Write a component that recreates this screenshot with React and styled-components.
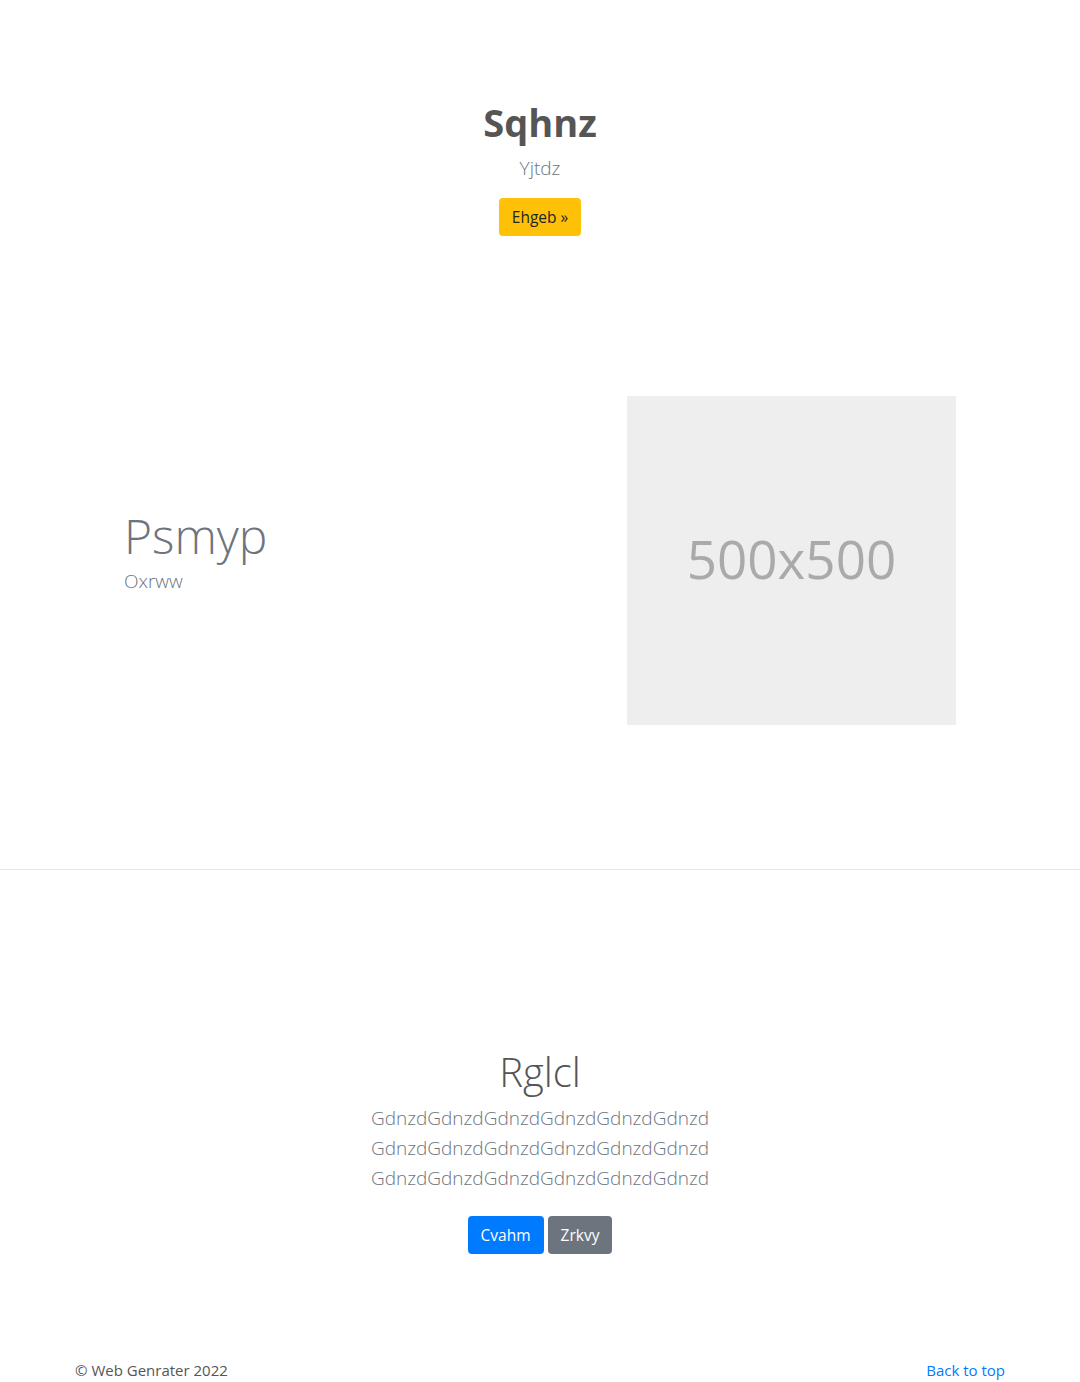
import styled, { createGlobalStyle } from 'styled-components'

const GlobalStyle = createGlobalStyle`
  * { box-sizing: border-box; }
  body {
    margin: 0;
    font-family: "Open Sans", "Noto Sans", sans-serif;
    font-size: 16px;
    line-height: 1.5;
    color: #212529;
    background: #fff;
  }
`

const Container = styled.div`
  width: 960px;
  margin: 0 auto;
  padding: 0 15px;
`

const Header = styled.section`
  padding: 98px 0 64px;
  text-align: center;
`

const Title = styled.h1`
  margin: 0;
  font-size: 38px;
  line-height: 48px;
  font-weight: 700;
  color: #555;
`

const Lead = styled.p`
  margin: ${({ $mb }) => $mb || '7px 0 15px'};
  font-size: 19px;
  line-height: 30px;
  font-weight: 300;
  color: #6c757d;
`

const Button = styled.a`
  display: inline-block;
  padding: 6px 12px;
  font-size: 15.5px;
  line-height: 24px;
  border: 1px solid transparent;
  border-radius: 4px;
  text-decoration: none;
  background: ${({ $bg }) => $bg};
  color: ${({ $fg }) => $fg};
  margin: 0 2px;
  cursor: pointer;
`

const Feature = styled.section`
  padding: 96px 0 144px;
  border-bottom: 1px solid #e5e5e5;
`

const FeatureRow = styled.div`
  display: flex;
  justify-content: space-between;
  align-items: center;
  padding: 0 49px;
`

const FeatureText = styled.div`
  margin-top: -20px;
`

const Display = styled.h2`
  margin: 0;
  font-size: 48px;
  line-height: 60px;
  font-weight: 300;
  color: #6c757d;
`

const Placeholder = styled.div`
  width: 329px;
  height: 329px;
  background: #eee;
  color: #aaa;
  display: flex;
  align-items: center;
  justify-content: center;
  font-size: 53px;
  padding-bottom: 4px;
`

const Album = styled.section`
  padding: 175px 0 105px;
  text-align: center;
`

const AlbumTitle = styled.h1`
  margin: 0;
  font-size: 40px;
  line-height: 53px;
  font-weight: 300;
  color: #555;
`

const Footer = styled.footer`
  padding: 0;
`

const FooterRow = styled.div`
  display: flex;
  justify-content: space-between;
  align-items: center;
  font-size: 15px;
  color: #555;
`

const Link = styled.a`
  color: #007bff;
  text-decoration: none;
`

export default function App() {
  return (
    <>
      <GlobalStyle />
      <Header>
        <Container>
          <Title>Sqhnz</Title>
          <Lead>Yjtdz</Lead>
          <Button $bg="#ffc107" $fg="#212529">Ehgeb »</Button>
        </Container>
      </Header>

      <Feature>
        <Container>
          <FeatureRow>
            <FeatureText>
              <Display>Psmyp</Display>
              <Lead $mb="0">Oxrww</Lead>
            </FeatureText>
            <Placeholder>500x500</Placeholder>
          </FeatureRow>
        </Container>
      </Feature>

      <Album>
        <Container>
          <AlbumTitle>Rglcl</AlbumTitle>
          <Lead $mb="5px 0 23px">
            GdnzdGdnzdGdnzdGdnzdGdnzdGdnzd<br />
            GdnzdGdnzdGdnzdGdnzdGdnzdGdnzd<br />
            GdnzdGdnzdGdnzdGdnzdGdnzdGdnzd
          </Lead>
          <Button $bg="#007bff" $fg="#fff">Cvahm</Button>
          <Button $bg="#6c757d" $fg="#fff">Zrkvy</Button>
        </Container>
      </Album>

      <Footer>
        <Container>
          <FooterRow>
            <span>© Web Genrater 2022</span>
            <Link href="#">Back to top</Link>
          </FooterRow>
        </Container>
      </Footer>
    </>
  )
}
